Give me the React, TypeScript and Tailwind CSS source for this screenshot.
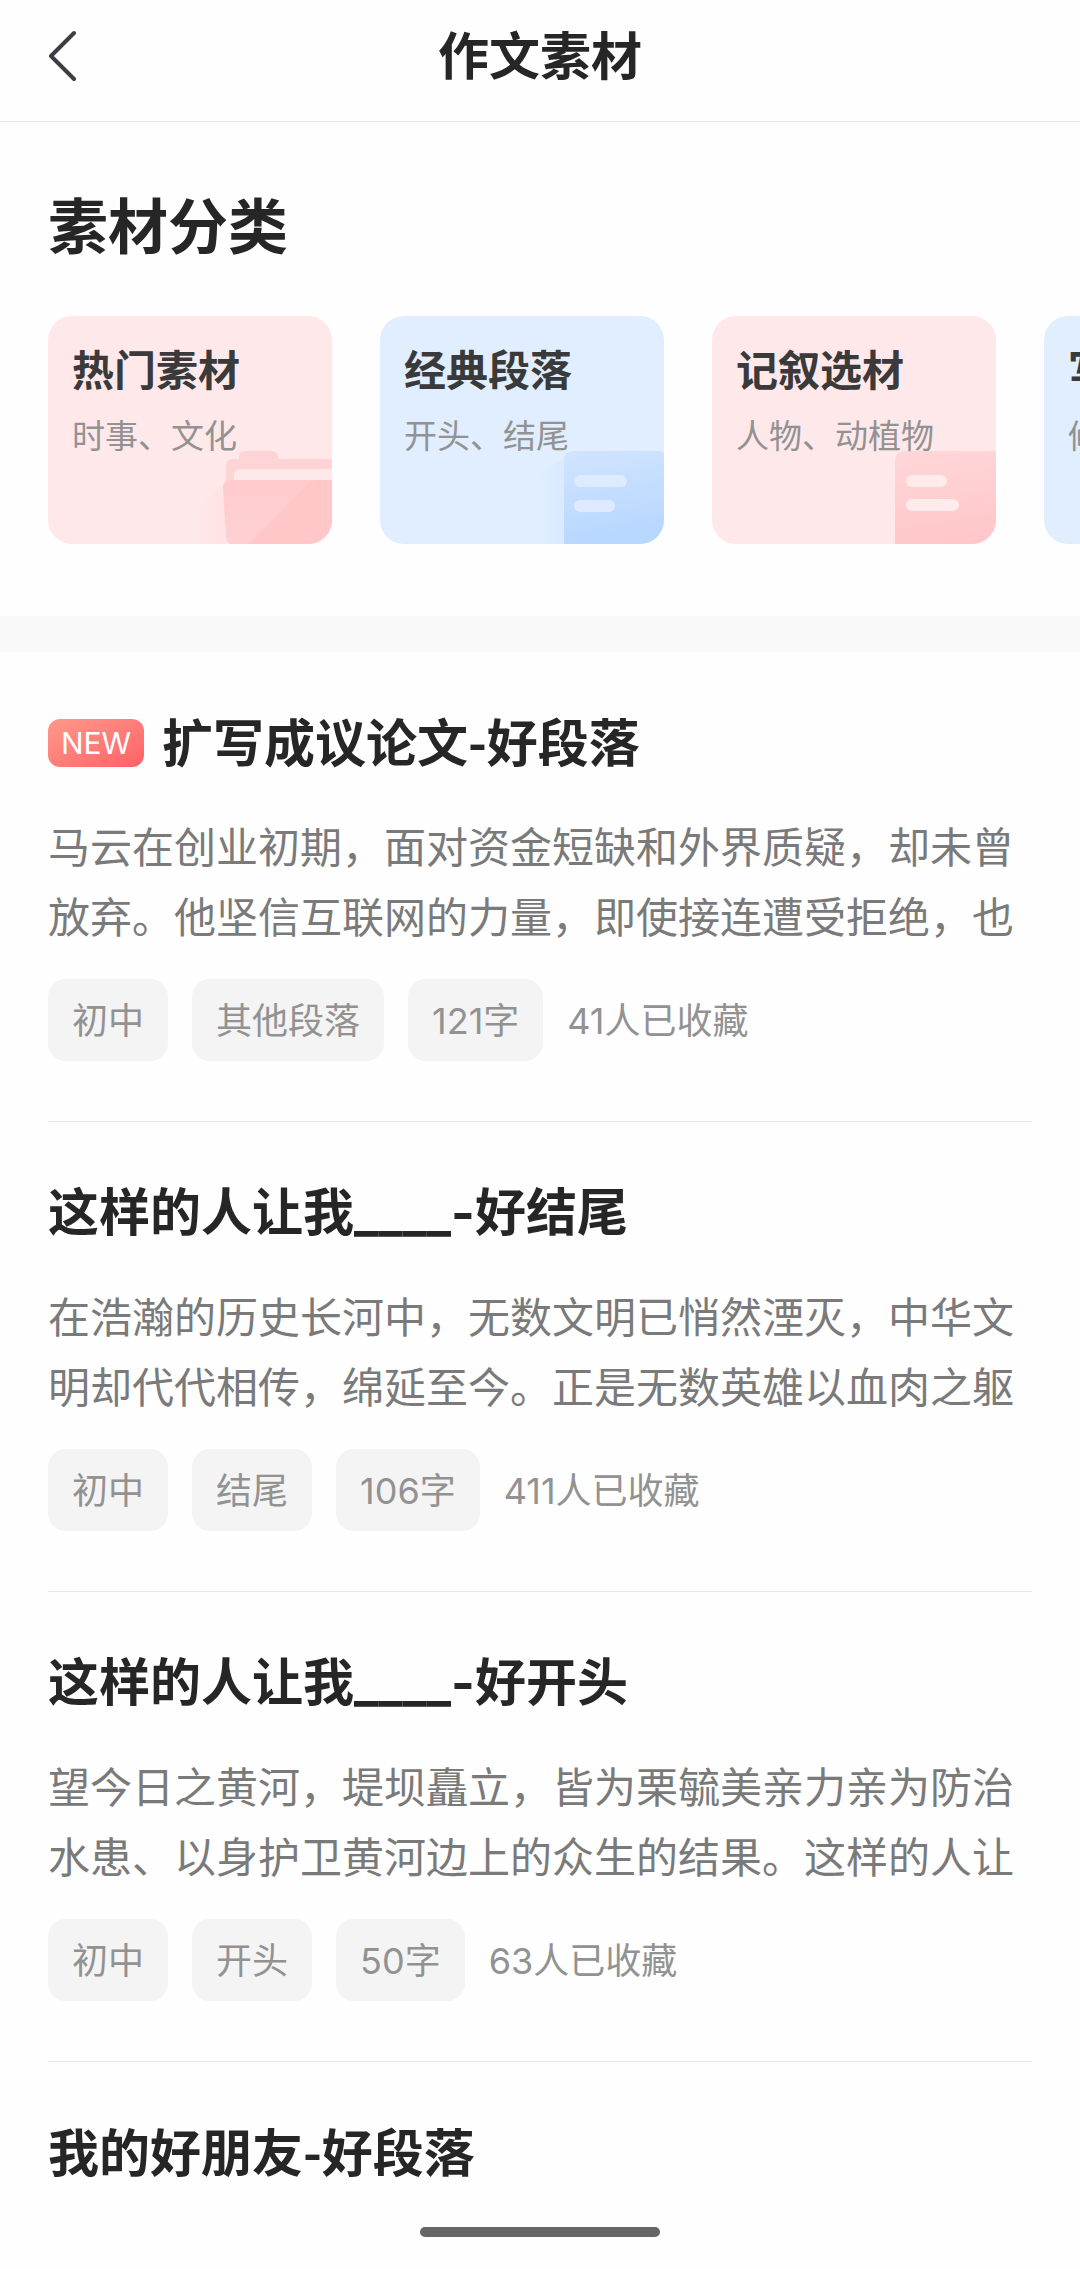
import type { ReactNode } from "react";

type Category = {
  title: string;
  desc: string;
  tone: string;
  art?: ReactNode;
};

type Material = {
  title: string;
  isNew?: boolean;
  content?: string;
  tags?: string[];
  collected?: string;
};

function FolderArt() {
  return (
    <svg
      viewBox="0 0 284 228"
      className="absolute inset-0 h-full w-full"
      aria-hidden="true"
    >
      <defs>
        <linearGradient id="folder-glow" x1="0" x2="1" y1="0" y2="0">
          <stop offset="0" stopColor="#ffdcde" stopOpacity="0" />
          <stop offset="1" stopColor="#ffdcde" stopOpacity="0.5" />
        </linearGradient>
        <linearGradient id="folder-front" x1="0" x2="0" y1="0" y2="1">
          <stop offset="0" stopColor="#ffcbcd" />
          <stop offset="1" stopColor="#ffd0d2" />
        </linearGradient>
      </defs>
      <path d="M148 228C148 200 156 176 177 168V228Z" fill="url(#folder-glow)" />
      <path
        d="M178 168V149Q178 143 184 143H191V141Q191 135 197 135H224Q230 135 230 141V143H284V168Z"
        fill="#ffd4d6"
      />
      <path d="M186 165V160Q186 153 193 153H284V165Z" fill="#ffe8e9" />
      <path d="M175 171Q175 164 182 164H284V228H183Q179 228 178 222Z" fill="url(#folder-front)" />
      <path d="M200 228L264 164H284V228Z" fill="#ffc7c8" />
    </svg>
  );
}

function BlueSheetArt() {
  return (
    <svg
      viewBox="0 0 284 228"
      className="absolute inset-0 h-full w-full"
      aria-hidden="true"
    >
      <defs>
        <linearGradient id="blue-sheet" x1="0" x2="0.2" y1="0" y2="1">
          <stop offset="0" stopColor="#d1e4ff" />
          <stop offset="1" stopColor="#b7d7ff" />
        </linearGradient>
        <linearGradient id="blue-glow" x1="0" x2="1" y1="0" y2="0">
          <stop offset="0" stopColor="#d4e6ff" stopOpacity="0" />
          <stop offset="1" stopColor="#d4e6ff" stopOpacity="0.5" />
        </linearGradient>
      </defs>
      <path d="M158 228V160L184 142V228Z" fill="url(#blue-glow)" />
      <path d="M184 228V145Q184 135 194 135H278Q288 135 288 145V228Z" fill="url(#blue-sheet)" />
      <rect x="194" y="159" width="53" height="12" rx="6" fill="#deebff" />
      <rect x="194" y="184" width="41" height="12" rx="6" fill="#deebff" />
    </svg>
  );
}

function PinkSheetArt() {
  return (
    <svg
      viewBox="0 0 284 228"
      className="absolute inset-0 h-full w-full"
      aria-hidden="true"
    >
      <defs>
        <linearGradient id="pink-sheet" x1="0" x2="0.2" y1="0" y2="1">
          <stop offset="0" stopColor="#ffd7d9" />
          <stop offset="1" stopColor="#ffc7c9" />
        </linearGradient>
      </defs>
      <path d="M183 228V145Q183 135 193 135H278Q288 135 288 145V228Z" fill="url(#pink-sheet)" />
      <rect x="194" y="159" width="41" height="12" rx="6" fill="#ffebec" />
      <rect x="194" y="183" width="53" height="12" rx="6" fill="#ffebec" />
    </svg>
  );
}

const categories: Category[] = [
  { title: "热门素材", desc: "时事、文化", tone: "bg-[#ffe8ea]", art: <FolderArt /> },
  { title: "经典段落", desc: "开头、结尾", tone: "bg-[#e0eeff]", art: <BlueSheetArt /> },
  { title: "记叙选材", desc: "人物、动植物", tone: "bg-[#ffe8ea]", art: <PinkSheetArt /> },
  { title: "写作手法", desc: "修辞、描写", tone: "bg-[#e0eeff]", art: <BlueSheetArt /> },
];

const materials: Material[] = [
  {
    title: "扩写成议论文-好段落",
    isNew: true,
    content:
      "马云在创业初期，面对资金短缺和外界质疑，却未曾放弃。他坚信互联网的力量，即使接连遭受拒绝，也",
    tags: ["初中", "其他段落", "121字"],
    collected: "41人已收藏",
  },
  {
    title: "这样的人让我____-好结尾",
    content:
      "在浩瀚的历史长河中，无数文明已悄然湮灭，中华文明却代代相传，绵延至今。正是无数英雄以血肉之躯",
    tags: ["初中", "结尾", "106字"],
    collected: "411人已收藏",
  },
  {
    title: "这样的人让我____-好开头",
    content:
      "望今日之黄河，堤坝矗立，皆为栗毓美亲力亲为防治水患、以身护卫黄河边上的众生的结果。这样的人让",
    tags: ["初中", "开头", "50字"],
    collected: "63人已收藏",
  },
  { title: "我的好朋友-好段落" },
];

function CategoryCard({ title, desc, tone, art }: Category) {
  return (
    <a
      href="#"
      className={`relative h-[228px] w-[284px] shrink-0 overflow-hidden rounded-3xl px-6 pt-[25px] ${tone}`}
    >
      {art}
      <h3 className="relative text-[42px] leading-[60px] font-bold whitespace-nowrap text-[#3a3a3a]">
        {title}
      </h3>
      <p className="relative mt-[11px] text-[33px] leading-[48px] whitespace-nowrap text-[#929292]">
        {desc}
      </p>
    </a>
  );
}

function MaterialItem({ title, isNew, content, tags, collected }: Material) {
  // the CJK face has the shorter hyphen but sits lower, Inter the shorter blank
  const titleFont = title.includes("_")
    ? "leading-[72px] font-['Inter','Noto_Sans_CJK_SC',sans-serif]"
    : "pb-[6px] leading-[66px] font-['Noto_Sans_CJK_SC',sans-serif]";

  return (
    <article className="border-b border-[#e8e8e8] pt-[55px] pb-[60px] last:border-b-0">
      <div className="flex items-center gap-[18px]">
        {isNew && (
          <span className="flex h-12 w-24 items-center justify-center rounded-xl bg-linear-to-br from-[#ff988c] to-[#ff6066] text-[30px] text-white">
            NEW
          </span>
        )}
        <h3 className={`text-[51px] font-bold text-[#262626] ${titleFont}`}>
          {title}
        </h3>
      </div>
      {content && (
        <p className="mt-[34px] line-clamp-2 text-[42px] leading-[70px] text-[#7a7a7a]">
          {content}
        </p>
      )}
      {tags && (
        <div className="mt-[26px] flex items-center gap-6 text-[36px] leading-[80px] text-[#929292]">
          {tags.map((tag) => (
            <span key={tag} className="rounded-[18px] bg-[#f4f4f4] px-6 pt-[2px]">
              {tag}
            </span>
          ))}
          <span className="pt-[2px]">{collected}</span>
        </div>
      )}
    </article>
  );
}

export default function App() {
  return (
    <div className="min-h-screen bg-[#fefefe] font-['Inter','Noto_Sans_CJK_SC',sans-serif]">
      <header className="grid h-[122px] grid-cols-[1fr_auto_1fr] items-center border-b border-[#e8e8e8] px-12 pb-2">
        <button type="button" aria-label="返回" className="w-7 pb-[2px]">
          <svg viewBox="0 0 28 52" className="h-[52px] w-7" fill="none">
            <path
              d="M26 3L3 26L26 49"
              stroke="#3d3d44"
              strokeWidth="4"
              strokeLinecap="round"
              strokeLinejoin="round"
            />
          </svg>
        </button>
        <h1 className="text-[51px] leading-[72px] font-bold text-[#262626]">
          作文素材
        </h1>
      </header>

      <main>
        <section className="pt-[63px] pb-[72px]">
          <h2 className="px-12 text-[60px] leading-[84px] font-bold text-[#262626]">
            素材分类
          </h2>
          <div className="mt-[47px] flex gap-12 overflow-hidden px-12">
            {categories.map((category) => (
              <CategoryCard key={category.title} {...category} />
            ))}
          </div>
        </section>

        <div className="h-9 bg-[#f9f9f9]" />

        <section className="px-12">
          {materials.map((material) => (
            <MaterialItem key={material.title} {...material} />
          ))}
        </section>
      </main>

      <div className="fixed inset-x-0 bottom-8 mx-auto h-[10px] w-60 rounded-full bg-[#666666]" />
    </div>
  );
}
